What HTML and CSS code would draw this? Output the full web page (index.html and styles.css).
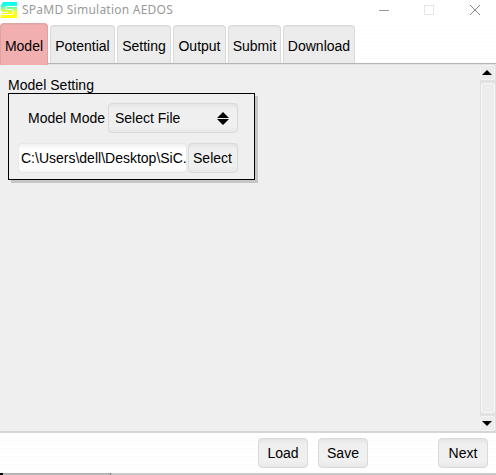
FILE: index.html
```
<!DOCTYPE html>
<html lang="en">
<head>
<meta charset="utf-8">
<title>SPaMD Simulation AEDOS</title>
<link rel="stylesheet" href="styles.css">
</head>
<body>
<header class="titlebar">
  <svg class="logo" viewBox="0 0 16 16">
    <defs><linearGradient id="lg" x1="0" y1="0" x2="0" y2="1"><stop offset="0" stop-color="#00ffff"/><stop offset=".2" stop-color="#20ffe0"/><stop offset=".65" stop-color="#ffff20"/><stop offset="1" stop-color="#ffff00"/></linearGradient></defs>
    <path fill="url(#lg)" d="M2 0H16V16H0V12L1 10L0 8V3Z"/>
    <path d="M16 4.500H6.500Q4.500 4.500 4.500 6T6.500 7.500H10.500Q12.500 7.500 12.500 9.500V10Q12.500 12.500 10.500 12.500H0M0 10.500H7" fill="none" stroke="#fff" stroke-width="1"/>
  </svg>
  <span class="title">SPaMD Simulation AEDOS</span>
  <svg class="controls" viewBox="0 0 106 20">
    <path d="M0 10.500H10" stroke="#999"/>
    <rect x="45.500" y="5.500" width="9" height="9" fill="none" stroke="#e6e6e6"/>
    <path d="M91 5L101 15M101 5L91 15" stroke="#8c8c8c"/>
  </svg>
</header>
<nav class="tabs">
  <button class="tab model active">Model</button>
  <button class="tab potential">Potential</button>
  <button class="tab setting">Setting</button>
  <button class="tab output">Output</button>
  <button class="tab submit">Submit</button>
  <button class="tab download">Download</button>
</nav>
<main class="content">
  <section class="panel">
    <div class="heading">Model Setting</div>
    <div class="group">
      <div class="row mode">
        <span class="label">Model Mode</span>
        <div class="box choice"><span>Select File</span>
          <svg class="sort" viewBox="0 0 12 13"><path d="M6 0L12 6H0ZM0 7H12L6 13Z"/></svg>
        </div>
      </div>
      <div class="row file">
        <div class="box path">C:\Users\dell\Desktop\SiC.</div>
        <button class="box select">Select</button>
      </div>
    </div>
  </section>
  <aside class="scroll">
    <div class="arrow"><svg viewBox="0 0 10 5"><path d="M5 0L10 5H0Z"/></svg></div>
    <div class="thumb"></div>
    <div class="arrow down"><svg viewBox="0 0 10 5"><path d="M0 0H10L5 5Z"/></svg></div>
  </aside>
</main>
<footer class="footer">
  <button class="box action">Load</button>
  <button class="box action">Save</button>
  <button class="box action next">Next</button>
</footer>
<div class="edge"></div>
</body>
</html>
```
FILE: styles.css
```
* { box-sizing: border-box; }
body {
  margin: 0;
  width: 496px;
  height: 475px;
  overflow: hidden;
  display: flex;
  flex-direction: column;
  background: #fff;
  color: #000;
  font: 14px/16px "Liberation Sans", Arial, sans-serif;
}
button { font: inherit; color: inherit; margin: 0; padding: 0; }
svg { display: block; }
.titlebar { height: 23px; display: flex; align-items: flex-start; }
.logo { width: 16px; height: 16px; margin: 2px 0 0 1px; }
.title {
  width: 152px;
  margin: 1px 0 0 5px;
  font: 12px/18px "Noto Sans", "Open Sans", sans-serif;
  letter-spacing: 0.24px;
  color: #999;
  white-space: nowrap;
}
.controls { width: 106px; height: 20px; margin-left: 205px; }
.tabs {
  height: 41px;
  display: flex;
  align-items: flex-end;
  gap: 2px;
  border-bottom: 1px solid #b5b5b5;
  background: repeating-linear-gradient(#fff 0 3px, #fcfcfc 3px 4px);
}
.tab {
  height: 38px;
  padding-top: 3px;
  border: 1px solid #dadada;
  border-bottom: 0;
  border-radius: 4px 4px 0 0;
  background: #ececec;
  box-shadow: inset 0 1px #e3e3e3;
}
.tab.active {
  height: 42px;
  margin-bottom: -2px;
  padding-top: 2px;
  background: #f2afaf;
  border-color: #dca5a5;
  box-shadow: inset 0 1px #e8a9a9;
  position: relative;
}
.model { width: 48px; }
.potential { width: 65px; }
.setting { width: 54px; }
.output { width: 53px; }
.submit { width: 53px; }
.download { width: 72px; }
.content {
  height: 369px;
  display: flex;
  justify-content: space-between;
  background: #efefef;
  border-bottom: 2px solid #d6d6d6;
  box-shadow: inset 0 1px #e2e2e2;
}
.panel { padding: 13px 0 0 8px; }
.heading { height: 16px; letter-spacing: 0.03px; }
.group {
  width: 247px;
  height: 87px;
  padding: 9px 0 0 9px;
  border: 1px solid #000;
  box-shadow: 3px 3px #c6c6c6;
}
.row { display: flex; align-items: center; height: 30px; }
.mode { padding-left: 10px; }
.file { margin-top: 10px; }
.label { width: 80px; white-space: nowrap; }
.box {
  height: 30px;
  border: 1px solid #dadada;
  border-radius: 4px;
  background: linear-gradient(#e5e5e5, #efefef 5px, #f0f0f0 22px, #e8e8e8);
  box-shadow: inset 0 1px #e5e5e5;
}
.choice {
  width: 130px;
  padding: 0 8px 0 6px;
  display: flex;
  align-items: center;
  justify-content: space-between;
}
.sort { width: 12px; height: 13px; }
.path {
  flex: none;
  width: 169px;
  padding: 6px 0 0 2px;
  overflow: hidden;
  white-space: nowrap;
  background: linear-gradient(#f2f2f2, #fff 6px, #fff 23px, #f5f5f5);
  border-color: #e8e8e8;
  box-shadow: none;
}
.select { width: 50px; margin-left: 1px; padding-right: 1px; }
.scroll {
  width: 16px;
  padding: 1px 1px 0 0;
  background: #e1e1e1;
  display: flex;
  flex-direction: column;
  gap: 3px;
}
.arrow {
  height: 15px;
  padding-right: 1px;
  border: 1px solid #f4f4f4;
  border-radius: 2px;
  background: #ececec;
  display: flex;
  justify-content: center;
  align-items: center;
}
.arrow svg { width: 10px; height: 5px; }
.thumb {
  flex: 1;
  margin: 0 0 0 1px;
  border: 1px solid #f8f8f8;
  border-radius: 2px;
  background: #ededed;
}
.footer {
  height: 40px;
  padding: 5px 8px 0 258px;
  display: flex;
  gap: 10px;
  background: repeating-linear-gradient(#fff 0 3px, #fcfcfc 3px 4px);
}
.action { width: 50px; }
.next { margin-left: auto; }
.edge {
  height: 2px;
  background: linear-gradient(90deg, #000 0 3px, #b5b5b5 3px 110px, #777 110px 111px, #c8c8c8 111px);
}
```
